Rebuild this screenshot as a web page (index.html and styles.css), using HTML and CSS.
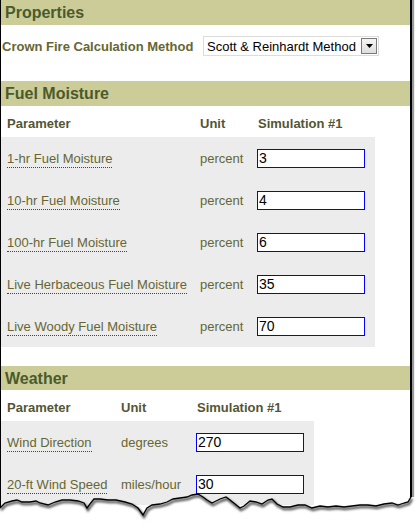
FILE: index.html
```html
<!DOCTYPE html>
<html>
<head>
<meta charset="utf-8">
<link rel="stylesheet" href="styles.css">
</head>
<body>
<div class="frame">
  <section class="panel">
    <h2 class="band">Properties</h2>
    <div class="prop-row">
      <span class="prop-label">Crown Fire Calculation Method</span>
      <div class="select">
        <span class="select-text">Scott &amp; Reinhardt Method</span>
        <span class="select-btn"><svg width="7" height="4" viewBox="0 0 7 4"><path d="M0 0H7L3.5 4Z" fill="#000"/></svg></span>
      </div>
    </div>
  </section>

  <section class="panel">
    <h2 class="band">Fuel Moisture</h2>
    <table class="params fuel">
      <thead>
        <tr><th class="c1">Parameter</th><th class="c2">Unit</th><th class="c3">Simulation #1</th></tr>
      </thead>
      <tbody>
        <tr><td class="c1"><a class="plink">1-hr Fuel Moisture</a></td><td class="c2">percent</td><td class="c3"><input class="val" value="3"></td></tr>
        <tr><td class="c1"><a class="plink">10-hr Fuel Moisture</a></td><td class="c2">percent</td><td class="c3"><input class="val" value="4"></td></tr>
        <tr><td class="c1"><a class="plink">100-hr Fuel Moisture</a></td><td class="c2">percent</td><td class="c3"><input class="val" value="6"></td></tr>
        <tr><td class="c1"><a class="plink">Live Herbaceous Fuel Moisture</a></td><td class="c2">percent</td><td class="c3"><input class="val" value="35"></td></tr>
        <tr><td class="c1"><a class="plink">Live Woody Fuel Moisture</a></td><td class="c2">percent</td><td class="c3"><input class="val" value="70"></td></tr>
      </tbody>
    </table>
  </section>

  <section class="panel weather-panel">
    <h2 class="band band-short">Weather</h2>
    <table class="params weather">
      <thead>
        <tr><th class="c1">Parameter</th><th class="c2">Unit</th><th class="c3">Simulation #1</th></tr>
      </thead>
      <tbody>
        <tr><td class="c1"><a class="plink">Wind Direction</a></td><td class="c2">degrees</td><td class="c3"><input class="val" value="270"></td></tr>
        <tr><td class="c1"><a class="plink">20-ft Wind Speed</a></td><td class="c2">miles/hour</td><td class="c3"><input class="val" value="30"></td></tr>
      </tbody>
    </table>
  </section>
</div>

<svg class="tear" width="416" height="40" viewBox="0 488 416 40">
  <defs>
    <filter id="sh" x="-5%" y="-50%" width="110%" height="200%">
      <feGaussianBlur stdDeviation="0.8"/>
    </filter>
  </defs>
  <path class="tear-fill" d="M0 508 L5 503 L12 501 L17 500 L22 502 L30 502 L36 501 L40 503 L48 505 L55 502 L62 500 L70 500 L78 501 L84 503 L87 508 L90 504 L94 499 L100 499 L108 500 L116 500 L125 502 L132 504 L138 508 L143 515 L147 508 L152 505 L160 504 L167 502 L173 499 L180 498 L187 497 L192 495 L198 494 L203 497 L207 500 L212 503 L216 501 L220 499 L226 497 L230 500 L235 504 L240 508 L244 506 L250 501 L256 502 L262 504 L268 500 L272 499 L277 504 L283 507 L290 507 L298 505 L305 505 L312 508 L320 506 L328 507 L336 506 L344 507 L352 506 L360 505 L368 505 L376 506 L384 504 L392 503 L398 505 L404 503 L408 502 L411 497 L416 497 L416 528 L0 528 Z"/>
  <path class="tear-shadow" filter="url(#sh)" transform="translate(1 2)" d="M0 508 L5 503 L12 501 L17 500 L22 502 L30 502 L36 501 L40 503 L48 505 L55 502 L62 500 L70 500 L78 501 L84 503 L87 508 L90 504 L94 499 L100 499 L108 500 L116 500 L125 502 L132 504 L138 508 L143 515 L147 508 L152 505 L160 504 L167 502 L173 499 L180 498 L187 497 L192 495 L198 494 L203 497 L207 500 L212 503 L216 501 L220 499 L226 497 L230 500 L235 504 L240 508 L244 506 L250 501 L256 502 L262 504 L268 500 L272 499 L277 504 L283 507 L290 507 L298 505 L305 505 L312 508 L320 506 L328 507 L336 506 L344 507 L352 506 L360 505 L368 505 L376 506 L384 504 L392 503 L398 505 L404 503 L408 502 L411 497"/>
  <path class="tear-line" d="M0 508 L5 503 L12 501 L17 500 L22 502 L30 502 L36 501 L40 503 L48 505 L55 502 L62 500 L70 500 L78 501 L84 503 L87 508 L90 504 L94 499 L100 499 L108 500 L116 500 L125 502 L132 504 L138 508 L143 515 L147 508 L152 505 L160 504 L167 502 L173 499 L180 498 L187 497 L192 495 L198 494 L203 497 L207 500 L212 503 L216 501 L220 499 L226 497 L230 500 L235 504 L240 508 L244 506 L250 501 L256 502 L262 504 L268 500 L272 499 L277 504 L283 507 L290 507 L298 505 L305 505 L312 508 L320 506 L328 507 L336 506 L344 507 L352 506 L360 505 L368 505 L376 506 L384 504 L392 503 L398 505 L404 503 L408 502 L411 497"/>
</svg>
</body>
</html>
```
FILE: styles.css
```css
html, body {
  margin: 0;
  padding: 0;
  background: #fff;
}
body {
  font-family: "Liberation Sans", Arial, sans-serif;
  width: 416px;
  height: 528px;
  overflow: hidden;
  position: relative;
}
.frame {
  width: 409px;
  height: 528px;
  border-left: 1px solid #000;
  border-right: 2px solid #000;
  box-shadow: 2px 0 1px #999;
}
.band {
  margin: 0;
  height: 25px;
  line-height: 25px;
  padding-left: 4px;
  background: #cccc99;
  color: #4b5a2b;
  font-size: 16px;
  font-weight: bold;
}
.band-short {
  height: 24px;
  line-height: 25px;
}
.prop-row {
  display: flex;
  align-items: center;
  padding: 11px 0 25px 1px;
}
.prop-label {
  flex: none;
  width: 201px;
  font-size: 13px;
  font-weight: bold;
  color: #666633;
}
.select {
  box-sizing: border-box;
  width: 176px;
  height: 20px;
  border: 1px solid #dcdcdc;
  background: #fff;
  display: flex;
  align-items: center;
  justify-content: space-between;
  padding: 0 1px 0 3px;
}
.select-text {
  font-size: 13px;
  color: #000;
}
.select-btn {
  box-sizing: border-box;
  width: 16px;
  height: 16px;
  border: 1px solid #7a7a7a;
  background: linear-gradient(#f4f4f4, #dedede);
  display: flex;
  align-items: center;
  justify-content: center;
}
.params {
  border-collapse: collapse;
  border-spacing: 0;
  table-layout: fixed;
}
.params th, .params td {
  box-sizing: border-box;
  padding: 0;
  text-align: left;
  vertical-align: middle;
}
.params th {
  height: 31px;
  padding-top: 3px;
  font-size: 13px;
  font-weight: bold;
  color: #555533;
}
.params td {
  height: 42px;
  background: #ececec;
  font-size: 13px;
  color: #666633;
}
.params .c1 { padding-left: 6px; }
.params th.c3 { padding-left: 1px; }
.params .c3 { padding-right: 10px; }
.fuel { width: 374px; }
.fuel .c1 { width: 199px; }
.fuel .c2 { width: 57px; }
.fuel .c3 { width: 118px; }
.weather { width: 313px; }
.weather .c1 { width: 120px; }
.weather .c2 { width: 75px; }
.weather .c3 { width: 118px; }
.weather-panel { margin-top: 19px; }
.plink {
  color: #666633;
  text-decoration: none;
  border-bottom: 1px dotted #444;
  padding-bottom: 1px;
}
.val {
  box-sizing: border-box;
  width: 108px;
  height: 19px;
  margin: 0;
  border: 1px solid #0000ff;
  padding: 0 1px;
  font-family: "Liberation Sans", Arial, sans-serif;
  font-size: 14px;
  color: #000;
  background: #fff;
  display: block;
}
.tear {
  position: absolute;
  left: 0;
  bottom: 0;
  display: block;
}
.tear-fill { fill: #fff; }
.tear-shadow { fill: none; stroke: #555; stroke-width: 2.5; }
.tear-line { fill: none; stroke: #000; stroke-width: 1.3; }
```
